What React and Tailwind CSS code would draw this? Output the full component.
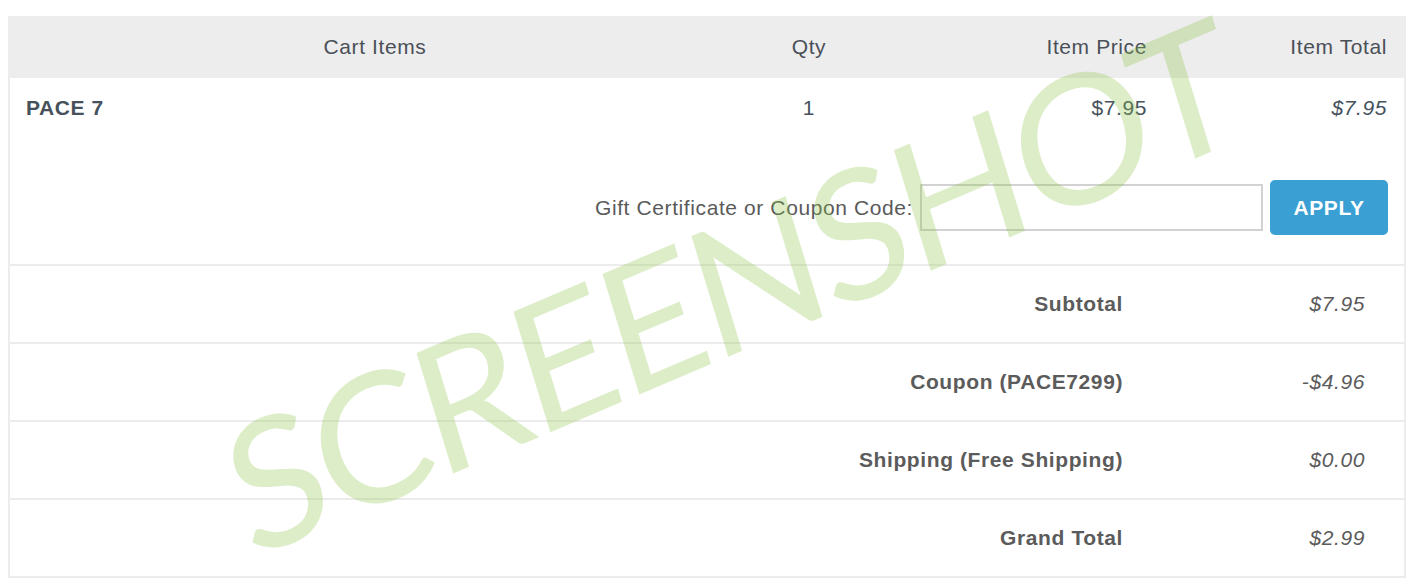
import { useState } from "react";

const summary = [
  { label: "Subtotal", value: "$7.95" },
  { label: "Coupon (PACE7299)", value: "-$4.96" },
  { label: "Shipping (Free Shipping)", value: "$0.00" },
  { label: "Grand Total", value: "$2.99" },
];

const App = () => {
  const [code, setCode] = useState("");

  return (
    <div className="relative min-h-[584px] bg-white overflow-hidden font-['Liberation_Sans',Arial,sans-serif] text-[21px] tracking-[0.6px]">
      <div className="ml-[8px] w-[1398px] pt-[16px]">
        <div className="border-2 border-t-0 border-[#ececec]">
          {/* header */}
          <div className="grid grid-cols-[730px_138px_288px_238px] h-[62px] items-center bg-[#ededed] text-[#4a5058] -mx-[2px] px-[2px]">
            <div className="text-center">Cart Items</div>
            <div className="text-center">Qty</div>
            <div className="text-right pr-[19px]">Item Price</div>
            <div className="text-right pr-[17px]">Item Total</div>
          </div>

          {/* item row */}
          <div className="grid grid-cols-[730px_138px_288px_238px] h-[60px] items-center text-[#46515b]">
            <div className="pl-[16px] font-bold">PACE 7</div>
            <div className="text-center">1</div>
            <div className="text-right pr-[19px]">$7.95</div>
            <div className="text-right pr-[17px] italic">$7.95</div>
          </div>

          {/* coupon */}
          <div className="flex justify-end items-center pt-[42px] pb-[29px] pr-[16px] border-b-2 border-[#ececec]">
            <label htmlFor="coupon" className="text-[#5a5a5a] mr-[7px]">
              Gift Certificate or Coupon Code:
            </label>
            <input
              id="coupon"
              value={code}
              onChange={(e) => setCode(e.target.value)}
              className="w-[343px] h-[47px] border-2 border-[#d2d2d2] px-2 outline-none"
            />
            <button className="ml-[7px] w-[118px] h-[55px] rounded-[5px] bg-[#3a9fd3] text-white font-bold">
              APPLY
            </button>
          </div>

          {/* totals */}
          {summary.map((row, i) => (
            <div
              key={row.label}
              className={
                "flex justify-end items-center pr-[39px] text-[#5b5b5b] " +
                (i < summary.length - 1 ? "h-[78px] border-b-2 border-[#ececec]" : "h-[76px]")
              }
            >
              <div className="font-bold">{row.label}</div>
              <div className="w-[242px] text-right italic">{row.value}</div>
            </div>
          ))}
        </div>
      </div>

      {/* watermark */}
      <div className="pointer-events-none absolute left-[206px] top-[410px] origin-top-left [transform:matrix(0.921,-0.391,0.292,0.956,0,0)] font-['Lato',sans-serif] text-[176px] leading-none tracking-[-5px] text-[rgba(139,195,74,0.3)] whitespace-nowrap">
        SCREENSHOT
      </div>
    </div>
  );
};

export default App;
